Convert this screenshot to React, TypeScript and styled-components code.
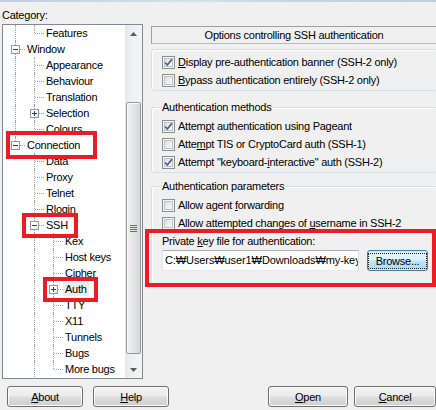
import React from "react";
import styled, { createGlobalStyle, css } from "styled-components";

const Global = createGlobalStyle`
  html, body { margin: 0; padding: 0; background: #f0f0f0; }
  body { font-family: "Liberation Sans", Arial, "DejaVu Sans", sans-serif; font-size: 11px; letter-spacing: -0.25px; color: #000; }
  * { box-sizing: border-box; }
`;

const Frame = styled.div`
  position: relative;
  width: 436px;
  height: 410px;
  overflow: hidden;
  background: #f0f0f0;
  display: flex;
  flex-direction: column;
`;

const TopEdge = styled.div`
  flex: none;
  height: 2px;
  background: linear-gradient(to right, #bfcde0, #d6e1ee 45%, #c9d6e6 60%, #bfcde0);
`;

const Main = styled.div`
  flex: none;
  height: 377px;
  display: flex;
  gap: 8px;
  padding-left: 2px;
`;

const LeftCol = styled.div`
  width: 141px;
  flex: none;
  display: flex;
  flex-direction: column;
`;

const Label = styled.div`
  height: 22px;
  padding-top: 7px;
  line-height: 13px;
`;

const Tree = styled.div`
  height: 355px;
  border: 1px solid #828790;
  background: #fff;
  display: flex;
  overflow: hidden;
`;

const TreeBody = styled.div`
  flex: 1;
  padding-left: 3px;
  overflow: hidden;
`;

const Row = styled.div`
  height: 16px;
  display: flex;
  align-items: center;
  white-space: nowrap;
`;

const dotV = css`
  content: "";
  position: absolute;
  left: 9px;
  border-left: 1px dotted #a0a0a0;
`;

const Guide = styled.span<{ $on: boolean }>`
  position: relative;
  flex: none;
  width: 19px;
  height: 16px;
  ${(p) =>
    p.$on &&
    css`
      &::before {
        ${dotV};
        top: 0;
        bottom: 0;
      }
    `}
`;

const Elbow = styled.span<{ $hasNext: boolean }>`
  position: relative;
  flex: none;
  width: 19px;
  height: 16px;
  &::before {
    ${dotV};
    top: 0;
    height: ${(p) => (p.$hasNext ? "16px" : "8px")};
  }
  &::after {
    content: "";
    position: absolute;
    left: 10px;
    top: 8px;
    width: 9px;
    border-top: 1px dotted #a0a0a0;
  }
`;

const Expander = styled.span<{ $plus: boolean }>`
  position: absolute;
  z-index: 1;
  left: 5px;
  top: 4px;
  width: 9px;
  height: 9px;
  border: 1px solid #8e9cae;
  background: linear-gradient(135deg, #ffffff 40%, #dfe4ea);
  &::before {
    content: "";
    position: absolute;
    left: 1px;
    top: 3px;
    width: 5px;
    height: 1px;
    background: #2a3f8f;
  }
  ${(p) =>
    p.$plus &&
    css`
      &::after {
        content: "";
        position: absolute;
        left: 3px;
        top: 1px;
        width: 1px;
        height: 5px;
        background: #2a3f8f;
      }
    `}
`;

const NodeLabel = styled.span<{ $selected?: boolean }>`
  padding: 0 2px;
  line-height: 14px;
  background: ${(p) => (p.$selected ? "#ececec" : "transparent")};
`;

const ScrollBar = styled.div`
  width: 17px;
  flex: none;
  display: flex;
  flex-direction: column;
  background: linear-gradient(to right, #e6e6e6, #efefef 30%, #f4f4f4);
`;

const ScrollBtn = styled.div`
  height: 17px;
  flex: none;
  display: flex;
  align-items: center;
  justify-content: center;
`;

const Track = styled.div`
  flex: 1;
  display: flex;
  flex-direction: column;
  padding: 0 1px;
`;

const Thumb = styled.div`
  margin-top: 60px;
  height: 252px;
  border: 1px solid #979797;
  border-radius: 2px;
  background: linear-gradient(to right, #f2f2f2, #e6e6e6 50%, #d6d6d6);
  box-shadow: inset 1px 1px 0 #fbfbfb;
  display: flex;
  align-items: center;
  justify-content: center;
`;

const RightCol = styled.div`
  width: 286px;
  flex: none;
  padding-top: 24px;
  display: flex;
  flex-direction: column;
`;

const Header = styled.div`
  height: 18px;
  border: 1px solid #a0a0a0;
  border-right-color: #e0e0e0;
  border-bottom-color: #b8b8b8;
  text-align: center;
  line-height: 16px;
`;

const Group = styled.fieldset<{ $mt: number; $h: number }>`
  margin: ${(p) => p.$mt}px 0 0;
  min-width: 0;
  height: ${(p) => p.$h}px;
  border: 1px solid #d5dfe5;
  border-radius: 3px;
  box-shadow: inset 1px 1px 0 #ffffff;
  padding: 3px 0 0 10px;
`;

const Legend = styled.legend`
  margin-left: -2px;
  padding: 0 2px;
  line-height: 13px;
`;

const CheckRow = styled.div`
  height: 18px;
  display: flex;
  align-items: center;
  gap: 3px;
  white-space: nowrap;
`;

const Box = styled.span`
  position: relative;
  width: 13px;
  height: 13px;
  flex: none;
  border: 1px solid #8e8f8f;
  background: linear-gradient(135deg, #d4d7db, #f6f6f6 75%);
  box-shadow: inset 0 0 0 1px #f4f4f4, inset 0 0 0 2px #bfc3c8;
  svg {
    position: absolute;
    left: 0;
    top: 0;
  }
`;

const FieldLabel = styled.div`
  height: 18px;
  line-height: 16px;
  padding-top: 1px;
`;

const FileRow = styled.div`
  display: flex;
  align-items: center;
  gap: 8px;
`;

const TextField = styled.div`
  width: 197px;
  height: 21px;
  border: 1px solid #abadb3;
  border-left-color: #e2e3ea;
  border-right-color: #dbdfe6;
  border-bottom-color: #e3e9ef;
  background: #fff;
  padding-left: 2px;
  line-height: 19px;
  overflow: hidden;
  white-space: nowrap;
  font-size: 11px;
  letter-spacing: -0.1px;
`;

const ButtonBase = styled.button<{ $w: number }>`
  width: ${(p) => p.$w}px;
  height: 21px;
  border: 1px solid #707070;
  border-radius: 3px;
  padding: 0;
  font: inherit;
  letter-spacing: inherit;
  color: #000;
  background: linear-gradient(#f2f2f2 0%, #ebebeb 48%, #dddddd 52%, #cfcfcf 100%);
  box-shadow: inset 0 0 0 1px #fbfbfb;
  display: flex;
  align-items: center;
  justify-content: center;
`;

const DefaultButton = styled(ButtonBase)`
  border-color: #3c7fb1;
  background: linear-gradient(#eaf6fd 0%, #d9f0fc 48%, #bee6fd 52%, #a7d9f5 100%);
  box-shadow: inset 0 0 0 1px #cbeafa;
  span {
    border: 1px dotted #222;
    padding: 1px 7px;
    line-height: 12px;
  }
`;

const Footer = styled.div`
  flex: none;
  margin-top: 7px;
  display: flex;
  justify-content: space-between;
  padding-left: 7px;
`;

const ButtonGroup = styled.div<{ $gap: number }>`
  display: flex;
  gap: ${(p) => p.$gap}px;
`;

const Mark = styled.div<{ $x: number; $y: number; $w: number; $h: number }>`
  position: absolute;
  left: ${(p) => p.$x}px;
  top: ${(p) => p.$y}px;
  width: ${(p) => p.$w}px;
  height: ${(p) => p.$h}px;
  border: 4px solid #ed1c24;
  pointer-events: none;
`;

type TreeNode = {
  label: React.ReactNode;
  level: number;
  guides: boolean[];
  hasNext: boolean;
  expander?: "plus" | "minus";
  selected?: boolean;
};

const nodes: TreeNode[] = [
  { label: "Features", level: 1, guides: [true], hasNext: false },
  { label: "Window", level: 0, guides: [], hasNext: true, expander: "minus" },
  { label: "Appearance", level: 1, guides: [true], hasNext: true },
  { label: "Behaviour", level: 1, guides: [true], hasNext: true },
  { label: "Translation", level: 1, guides: [true], hasNext: true },
  { label: "Selection", level: 1, guides: [true], hasNext: true, expander: "plus" },
  { label: "Colours", level: 1, guides: [true], hasNext: false },
  { label: "Connection", level: 0, guides: [], hasNext: false, expander: "minus" },
  { label: "Data", level: 1, guides: [false], hasNext: true },
  { label: "Proxy", level: 1, guides: [false], hasNext: true },
  { label: "Telnet", level: 1, guides: [false], hasNext: true },
  { label: "Rlogin", level: 1, guides: [false], hasNext: true },
  { label: "SSH", level: 1, guides: [false], hasNext: true, expander: "minus" },
  { label: "Kex", level: 2, guides: [false, true], hasNext: true },
  { label: "Host keys", level: 2, guides: [false, true], hasNext: true },
  { label: "Cipher", level: 2, guides: [false, true], hasNext: true },
  { label: "Auth", level: 2, guides: [false, true], hasNext: true, expander: "plus", selected: true },
  { label: "TTY", level: 2, guides: [false, true], hasNext: true },
  { label: "X11", level: 2, guides: [false, true], hasNext: true },
  { label: "Tunnels", level: 2, guides: [false, true], hasNext: true },
  { label: "Bugs", level: 2, guides: [false, true], hasNext: true },
  { label: "More bugs", level: 2, guides: [false, true], hasNext: false },
];

const Check = ({ checked, children }: { checked?: boolean; children: React.ReactNode }) => (
  <CheckRow>
    <Box>
      {checked && (
        <svg width="11" height="11" viewBox="0 0 11 11">
          <path d="M2 5.5 L4.3 8 L9 2.2" fill="none" stroke="#4b5e8c" strokeWidth="1.7" />
        </svg>
      )}
    </Box>
    <span>{children}</span>
  </CheckRow>
);

const Arrow = ({ up }: { up?: boolean }) => (
  <svg width="7" height="4" viewBox="0 0 7 4">
    <path d={up ? "M0 4 L3.5 0 L7 4 Z" : "M0 0 L3.5 4 L7 0 Z"} fill="#5a5a5a" />
  </svg>
);

export default function App() {
  return (
    <Frame>
      <Global />
      <TopEdge />
      <Main>
        <LeftCol>
          <Label>
            Cate<u>g</u>ory:
          </Label>
          <Tree>
            <TreeBody>
              {nodes.map((n, i) => (
                <Row key={i}>
                  {n.guides.map((g, j) => (
                    <Guide key={j} $on={g} />
                  ))}
                  <Elbow $hasNext={n.hasNext}>
                    {n.expander && <Expander $plus={n.expander === "plus"} />}
                  </Elbow>
                  <NodeLabel $selected={n.selected}>{n.label}</NodeLabel>
                </Row>
              ))}
            </TreeBody>
            <ScrollBar>
              <ScrollBtn>
                <Arrow up />
              </ScrollBtn>
              <Track>
                <Thumb>
                  <svg width="7" height="7" viewBox="0 0 7 7">
                    <path d="M0 0.5H7M0 2.5H7M0 4.5H7M0 6.5H7" stroke="#6d6d6d" strokeWidth="1" />
                  </svg>
                </Thumb>
              </Track>
              <ScrollBtn>
                <Arrow />
              </ScrollBtn>
            </ScrollBar>
          </Tree>
        </LeftCol>
        <RightCol>
          <Header>Options controlling SSH authentication</Header>
          <Group $mt={5} $h={42}>
            <Check checked>
              <u>D</u>isplay pre-authentication banner (SSH-2 only)
            </Check>
            <Check>
              <u>B</u>ypass authentication entirely (SSH-2 only)
            </Check>
          </Group>
          <Group $mt={10} $h={72}>
            <Legend>Authentication methods</Legend>
            <Check checked>
              Attem<u>p</u>t authentication using Pageant
            </Check>
            <Check>
              Atte<u>m</u>pt TIS or CryptoCard auth (SSH-1)
            </Check>
            <Check checked>
              Attempt "keyboard-<u>i</u>nteractive" auth (SSH-2)
            </Check>
          </Group>
          <Group $mt={7} $h={104}>
            <Legend>Authentication parameters</Legend>
            <Check>
              Allow agent <u>f</u>orwarding
            </Check>
            <Check>
              Allow attempted changes of <u>u</u>sername in SSH-2
            </Check>
            <FieldLabel>
              Private <u>k</u>ey file for authentication:
            </FieldLabel>
            <FileRow>
              <TextField>C:₩Users₩user1₩Downloads₩my-key</TextField>
              <DefaultButton $w={61}>
                <span>Browse...</span>
              </DefaultButton>
            </FileRow>
          </Group>
        </RightCol>
      </Main>
      <Footer>
        <ButtonGroup $gap={10}>
          <ButtonBase $w={76}>
            <u>A</u>bout
          </ButtonBase>
          <ButtonBase $w={76}>
            <u>H</u>elp
          </ButtonBase>
        </ButtonGroup>
        <ButtonGroup $gap={6}>
          <ButtonBase $w={80}>
            <u>O</u>pen
          </ButtonBase>
          <ButtonBase $w={82}>
            <u>C</u>ancel
          </ButtonBase>
        </ButtonGroup>
      </Footer>
      <Mark $x={6} $y={131} $w={91} $h={28} />
      <Mark $x={22} $y={213} $w={56} $h={25} />
      <Mark $x={43} $y={277} $w={55} $h={25} />
      <Mark $x={145} $y={229} $w={291} $h={58} />
    </Frame>
  );
}
